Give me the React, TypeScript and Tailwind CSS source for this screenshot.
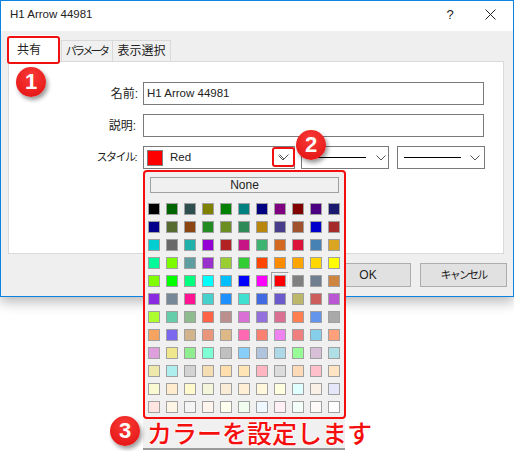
const SWATCHES = [
  "bg-[#000000]","bg-[#006400]","bg-[#2f4f4f]","bg-[#808000]","bg-[#008000]","bg-[#008080]","bg-[#000080]","bg-[#800080]","bg-[#800000]","bg-[#4b0082]","bg-[#191970]",
  "bg-[#00008b]","bg-[#556b2f]","bg-[#8b4513]","bg-[#228b22]","bg-[#6b8e23]","bg-[#2e8b57]","bg-[#b8860b]","bg-[#483d8b]","bg-[#a0522d]","bg-[#0000cd]","bg-[#a52a2a]",
  "bg-[#00ced1]","bg-[#696969]","bg-[#20b2aa]","bg-[#9400d3]","bg-[#b22222]","bg-[#c71585]","bg-[#3cb371]","bg-[#d2691e]","bg-[#dc143c]","bg-[#4682b4]","bg-[#daa520]",
  "bg-[#00fa9a]","bg-[#7cfc00]","bg-[#5f9ea0]","bg-[#9932cc]","bg-[#9acd32]","bg-[#32cd32]","bg-[#ff4500]","bg-[#ff8c00]","bg-[#ffa500]","bg-[#ffd700]","bg-[#ffff00]",
  "bg-[#7fff00]","bg-[#00ff00]","bg-[#00ff7f]","bg-[#00ffff]","bg-[#00bfff]","bg-[#0000ff]","bg-[#ff00ff]","bg-[#ff0000]","bg-[#808080]","bg-[#708090]","bg-[#cd853f]",
  "bg-[#8a2be2]","bg-[#778899]","bg-[#ff1493]","bg-[#48d1cc]","bg-[#1e90ff]","bg-[#40e0d0]","bg-[#4169e1]","bg-[#6a5acd]","bg-[#bdb76b]","bg-[#cd5c5c]","bg-[#ba55d3]",
  "bg-[#adff2f]","bg-[#66cdaa]","bg-[#8fbc8f]","bg-[#ff6347]","bg-[#bc8f8f]","bg-[#da70d6]","bg-[#9370db]","bg-[#db7093]","bg-[#ff7f50]","bg-[#6495ed]","bg-[#a9a9a9]",
  "bg-[#f4a460]","bg-[#7b68ee]","bg-[#d2b48c]","bg-[#e9967a]","bg-[#deb887]","bg-[#ff69b4]","bg-[#fa8072]","bg-[#ee82ee]","bg-[#f08080]","bg-[#87ceeb]","bg-[#ffa07a]",
  "bg-[#dda0dd]","bg-[#f0e68c]","bg-[#90ee90]","bg-[#7fffd4]","bg-[#c0c0c0]","bg-[#87cefa]","bg-[#b0c4de]","bg-[#add8e6]","bg-[#98fb98]","bg-[#d8bfd8]","bg-[#b0e0e6]",
  "bg-[#eee8aa]","bg-[#afeeee]","bg-[#d3d3d3]","bg-[#f5deb3]","bg-[#ffdead]","bg-[#ffe4b5]","bg-[#ffb6c1]","bg-[#dcdcdc]","bg-[#ffdab9]","bg-[#ffc0cb]","bg-[#ffe4c4]",
  "bg-[#fafad2]","bg-[#ffebcd]","bg-[#fffacd]","bg-[#f5f5dc]","bg-[#faebd7]","bg-[#ffefd5]","bg-[#fff8dc]","bg-[#ffffe0]","bg-[#e0ffff]","bg-[#faf0e6]","bg-[#e6e6fa]",
  "bg-[#ffe4e1]","bg-[#fdf5e6]","bg-[#f5f5f5]","bg-[#fff5ee]","bg-[#fffff0]","bg-[#f0fff0]","bg-[#f0f8ff]","bg-[#fff0f5]","bg-[#f5fffa]","bg-[#fffafa]","bg-[#ffffff]",
];

function Chevron() {
  return (
    <svg width="10" height="6" viewBox="0 0 10 6" fill="none" stroke="#555" strokeWidth="1">
      <path d="M0.5 0.5 L5 5 L9.5 0.5" />
    </svg>
  );
}

function Badge({ n, className }: { n: string; className: string }) {
  return (
    <div
      className={`absolute w-[30px] h-[30px] rounded-full flex items-center justify-center text-white font-bold text-[22px] leading-none font-['Liberation_Sans',sans-serif] bg-[radial-gradient(circle_at_50%_30%,#f93a36,#e01010)] shadow-[2px_3px_4px_rgba(0,0,0,0.4)] ${className}`}
    >
      {n}
    </div>
  );
}

function Row({ label, labelClass, children }: { label: string; labelClass?: string; children: React.ReactNode }) {
  return (
    <div className="flex items-center h-[23px]">
      <div className={`w-[129px] text-right text-[#222] whitespace-nowrap ${labelClass ?? ""}`}>{label}</div>
      <div className="ml-[5px] flex-1 flex gap-[6px]">{children}</div>
    </div>
  );
}

export default function App() {
  return (
    <div className="relative w-[514px] h-[451px] overflow-hidden bg-white text-[12px] leading-none text-[#222] font-['Liberation_Sans','Noto_Sans_CJK_JP',sans-serif]">
      <div className="w-[514px] h-[297px] flex flex-col border border-[#0a84e0] bg-[#efefef] shadow-[0_5px_12px_rgba(0,0,0,0.28)]">
        <div className="h-[30px] bg-white flex items-center pl-[9px]">
          <span className="flex-1 pb-[2px] text-[11.5px]">H1 Arrow 44981</span>
          <span className="w-[20px] text-center text-[13px] font-medium pb-[4px]">?</span>
          <svg className="ml-[25px] mr-[17px] mb-[3px]" width="11" height="11" viewBox="0 0 11 11" stroke="#222" strokeWidth="1">
            <path d="M0.5 0.5 L10.5 10.5 M10.5 0.5 L0.5 10.5" />
          </svg>
        </div>
        <div className="flex pl-[7px] h-[30px] items-end">
          <div className="w-[52px] h-[26px] bg-white" />
          <div className="w-[52px] h-[21px] ml-[1px] bg-[#f0f0f0] border border-b-0 border-[#d9d9d9] flex items-center justify-center text-[11px] tracking-[-2.6px] pr-[1px] whitespace-nowrap">パラメータ</div>
          <div className="w-[58px] h-[21px] bg-[#f0f0f0] border border-b-0 border-l-0 border-[#d9d9d9] flex items-center justify-center whitespace-nowrap">表示選択</div>
        </div>
        <div className="ml-[7px] w-[496px] h-[193px] bg-white border border-[#d9d9d9] pt-[20px] flex flex-col gap-[9px]">
          <Row label="名前:">
            <div className="w-[341px] h-[23px] border border-[#7a7a7a] flex items-center pl-[3px] text-[11.5px]">H1 Arrow 44981</div>
          </Row>
          <Row label="説明:" labelClass="pr-[2px]">
            <div className="w-[341px] h-[23px] border border-[#7a7a7a]" />
          </Row>
          <Row label="スタイル:" labelClass="pr-[2px] text-[11px] tracking-[-1.5px]">
            <div className="w-[152px] h-[23px] border border-[#7a7a7a] flex items-center pl-[3px]">
              <span className="w-[16px] h-[16px] bg-[#ff0000] border border-[#808080]" />
              <span className="ml-[7px] flex-1 text-[11.5px]">Red</span>
              <span className="mr-[6px] mt-[1px]"><Chevron /></span>
            </div>
            <div className="w-[88px] h-[23px] border border-[#7a7a7a] flex items-center pl-[4px]">
              <span className="w-[60px] h-[1px] bg-black" />
              <span className="ml-[10px]"><Chevron /></span>
            </div>
            <div className="ml-[2px] w-[88px] h-[23px] border border-[#7a7a7a] flex items-center pl-[6px]">
              <span className="w-[57px] h-[1px] bg-black" />
              <span className="ml-[9px]"><Chevron /></span>
            </div>
          </Row>
        </div>
        <div className="flex justify-end gap-[9px] pr-[6px] pt-[9px]">
          <div className="w-[86px] h-[24px] bg-[#e1e1e1] border border-[#adadad] flex items-center justify-center">OK</div>
          <div className="w-[87px] h-[24px] bg-[#e1e1e1] border border-[#adadad] flex items-center justify-center text-[11px] tracking-[-1.8px]">キャンセル</div>
        </div>
      </div>

      {/* selected tab highlight */}
      <div className="absolute left-[7px] top-[36px] w-[53px] h-[28px] bg-white border-[2px] border-[#f01010] rounded-[3px] pl-[8px] flex items-center">共有</div>
      <Badge n="1" className="left-[16px] top-[67px]" />

      {/* arrow highlight */}
      <div className="absolute left-[272px] top-[147px] w-[23px] h-[20px] border-[2px] border-[#f01010] rounded-[3px] flex items-center justify-center">
        <Chevron />
      </div>
      <Badge n="2" className="left-[296px] top-[130px]" />

      {/* colour popup */}
      <div className="absolute left-[143px] top-[170px] w-[203px] h-[249px] bg-[#f0f0f0] border-[2px] border-[#f40e0e] rounded-[4px] pl-[3px] pt-[5px]">
        <div className="ml-[2px] w-[189px] h-[16px] border border-[#a0a0a0] flex items-center justify-center text-[12px]">None</div>
        <div className="mt-[10px] grid grid-cols-11 gap-[6px] w-[192px]">
          {SWATCHES.map((c, i) => (
            <div key={i} className="relative w-[12px] h-[12px]">
              {c === "bg-[#ff0000]" && (
                <div className="absolute left-[-3px] top-[-3px] w-[18px] h-[18px] border border-t-[#a0a0a0] border-l-[#a0a0a0] border-r-white border-b-white" />
              )}
              <div className={`w-[12px] h-[12px] border border-[#a0a0a0] ${c}`} />
            </div>
          ))}
        </div>
      </div>

      {/* caption strip */}
      <div className="absolute left-[143px] top-[419px] w-[202px] h-[31px] bg-[#f0f0f0] border-b-[2px] border-[#9a9a9a]" />
      <div className="absolute left-[147px] top-[419px] text-[25px] font-medium leading-[30px] text-[#f40e0e] whitespace-nowrap [text-shadow:0_0_2px_white,0_0_2px_white,0_0_2px_white]">カラーを設定します</div>
      <Badge n="3" className="left-[110px] top-[416px]" />
    </div>
  );
}
